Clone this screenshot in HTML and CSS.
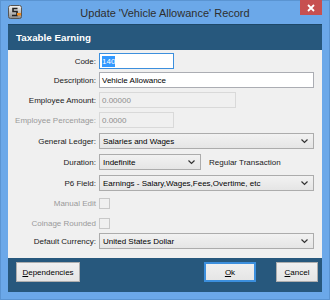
FILE: index.html
```html
<!DOCTYPE html>
<html>
<head>
<meta charset="utf-8">
<link rel="stylesheet" href="styles.css">
</head>
<body>
<div class="window">
  <div class="titlebar">
    <svg class="appicon" width="14" height="14" viewBox="0 0 14 14">
      <defs>
        <linearGradient id="ig" x1="0" y1="0" x2="0" y2="1">
          <stop offset="0" stop-color="#f4f4f4"/>
          <stop offset="1" stop-color="#8a8a8a"/>
        </linearGradient>
      </defs>
      <rect x="0.5" y="0.5" width="13" height="13" rx="2" fill="url(#ig)" stroke="#555"/>
      <path d="M9.5 3.5 H5 V6.5 H9 V10.5 H4" fill="none" stroke="#222" stroke-width="1.6"/>
      <rect x="9" y="8" width="4" height="2.5" fill="#f08a1c"/>
    </svg>
    <div class="title">Update 'Vehicle Allowance' Record</div>
    <div class="close">
      <svg width="8" height="8" viewBox="0 0 8 8"><path d="M1 1 L7 7 M7 1 L1 7" stroke="#fff" stroke-width="1.8"/></svg>
    </div>
  </div>
  <div class="client">
    <div class="header">Taxable Earning</div>
    <div class="form">
      <div class="row r1"><span class="lbl">Code:</span><span class="input w-code focus"><span class="sel">140</span></span></div>
      <div class="row r2"><span class="lbl">Description:</span><span class="input w-full">Vehicle Allowance</span></div>
      <div class="row r3"><span class="lbl">Employee Amount:</span><span class="input disabled w-amt">0.00000</span></div>
      <div class="row r4"><span class="lbl dim">Employee Percentage:</span><span class="input disabled w-code">0.0000</span></div>
      <div class="row r5"><span class="lbl">General Ledger:</span><span class="select w-full"><span class="st">Salaries and Wages</span><svg class="chev" width="7" height="5" viewBox="0 0 7 5"><path d="M0.5 0.5 L3.5 3.5 L6.5 0.5" fill="none" stroke="#333" stroke-width="1.2"/></svg></span></div>
      <div class="row r6"><span class="lbl">Duration:</span><span class="select w-dur"><span class="st">Indefinite</span><svg class="chev" width="7" height="5" viewBox="0 0 7 5"><path d="M0.5 0.5 L3.5 3.5 L6.5 0.5" fill="none" stroke="#333" stroke-width="1.2"/></svg></span><span class="extra">Regular Transaction</span></div>
      <div class="row r7"><span class="lbl">P6 Field:</span><span class="select w-full"><span class="st">Earnings - Salary,Wages,Fees,Overtime, etc</span><svg class="chev" width="7" height="5" viewBox="0 0 7 5"><path d="M0.5 0.5 L3.5 3.5 L6.5 0.5" fill="none" stroke="#333" stroke-width="1.2"/></svg></span></div>
      <div class="row r8"><span class="lbl dim">Manual Edit</span><span class="check"></span></div>
      <div class="row r9"><span class="lbl dim">Coinage Rounded</span><span class="check"></span></div>
      <div class="row r10"><span class="lbl">Default Currency:</span><span class="select w-full"><span class="st">United States Dollar</span><svg class="chev" width="7" height="5" viewBox="0 0 7 5"><path d="M0.5 0.5 L3.5 3.5 L6.5 0.5" fill="none" stroke="#333" stroke-width="1.2"/></svg></span></div>
    </div>
    <div class="footer">
      <button class="btn b-dep"><u>D</u>ependencies</button>
      <div class="spacer"></div>
      <button class="btn b-ok"><u>O</u>k</button>
      <button class="btn b-cancel"><u>C</u>ancel</button>
    </div>
  </div>
</div>
</body>
</html>
```
FILE: styles.css
```css
html, body {
  margin: 0;
  padding: 0;
  background: #6ba8e9;
}
.window {
  width: 330px;
  height: 300px;
  box-sizing: border-box;
  background: #6ba8e9;
  border: 1px solid #5a94d2;
  display: flex;
  flex-direction: column;
  font-family: "Liberation Sans", Arial, sans-serif;
}
.titlebar {
  height: 23px;
  position: relative;
  display: flex;
  align-items: center;
  justify-content: center;
}
.appicon {
  position: absolute;
  left: 7px;
  top: 4px;
}
.title {
  font-size: 11px;
  color: #2e2e2e;
  margin-top: 0px;
}
.close {
  position: absolute;
  right: 7px;
  top: -1px;
  width: 22px;
  height: 15px;
  background: #c75050;
  display: flex;
  align-items: center;
  justify-content: center;
}
.client {
  margin: 0 7px 7px 7px;
  flex: 1;
  display: flex;
  flex-direction: column;
}
.header {
  height: 26px;
  background: #27587d;
  color: #fff;
  font-weight: bold;
  font-size: 9.8px;
  padding-left: 8px;
  display: flex;
  align-items: center;
  box-sizing: border-box;
  border-top: 1px solid #1e4868;
}
.form {
  height: 208px;
  background: #f0f0f0;
  box-sizing: border-box;
  padding-top: 3px;
  font-size: 8px;
  color: #1a1a1a;
}
.row {
  display: flex;
  align-items: center;
  height: 20px;
}
.r1 { height: 16px; margin-bottom: 3px; }
.r2 { height: 16px; margin-bottom: 4px; }
.r3 { height: 16px; margin-bottom: 4px; }
.r4 { height: 16px; margin-bottom: 5px; }
.r5 { height: 16px; margin-bottom: 5px; }
.r6 { height: 16px; margin-bottom: 5px; }
.r7 { height: 16px; margin-bottom: 4px; }
.r8 { height: 16px; margin-bottom: 4px; }
.r9 { height: 16px; margin-bottom: 2px; }
.r10 { height: 16px; }
.lbl {
  width: 88px;
  text-align: right;
  padding-right: 3px;
  flex: none;
  white-space: nowrap;
}
.lbl.dim { color: #9a9a9a; }
.input {
  height: 16px;
  box-sizing: border-box;
  border: 1px solid #abadb3;
  background: #fff;
  padding: 0 2px;
  display: flex;
  align-items: center;
  color: #000;
  white-space: nowrap;
}
.input.focus { border-color: #3c8fdd; }
.input.disabled {
  background: #f0f0f0;
  border-color: #d9d9d9;
  color: #8d8d8d;
}
.sel {
  background: #3399ff;
  color: #fff;
  padding: 1px 0;
}
.w-code { width: 75px; }
.w-full { width: 215px; }
.w-amt { width: 137px; }
.w-dur { width: 102px; }
.select {
  height: 16px;
  box-sizing: border-box;
  border: 1px solid #acacac;
  background: linear-gradient(#f2f2f2, #e5e5e5);
  padding: 0 5px 0 3px;
  display: flex;
  align-items: center;
  justify-content: space-between;
  color: #000;
  white-space: nowrap;
}
.chev { flex: none; }
.extra {
  margin-left: 8px;
  color: #1a1a1a;
}
.check {
  width: 11px;
  height: 11px;
  box-sizing: border-box;
  border: 1px solid #c8c8c8;
  background: #f0f0f0;
}
.footer {
  flex: 1;
  background: #27587d;
  display: flex;
  align-items: flex-start;
  padding: 4px 4px 0 8px;
}
.spacer { flex: 1; }
.btn {
  height: 20px;
  box-sizing: border-box;
  border: 1px solid #adadad;
  background: linear-gradient(#f0f0f0, #e5e5e5);
  font-family: "Liberation Sans", Arial, sans-serif;
  font-size: 8px;
  color: #000;
  padding: 0;
  margin: 0;
}
.b-dep { width: 64px; }
.b-ok { width: 52px; border: 1px solid #3c8fdd; box-shadow: inset 0 0 0 1px #3c8fdd; margin-right: 20px; }
.b-cancel { width: 42px; }
```
